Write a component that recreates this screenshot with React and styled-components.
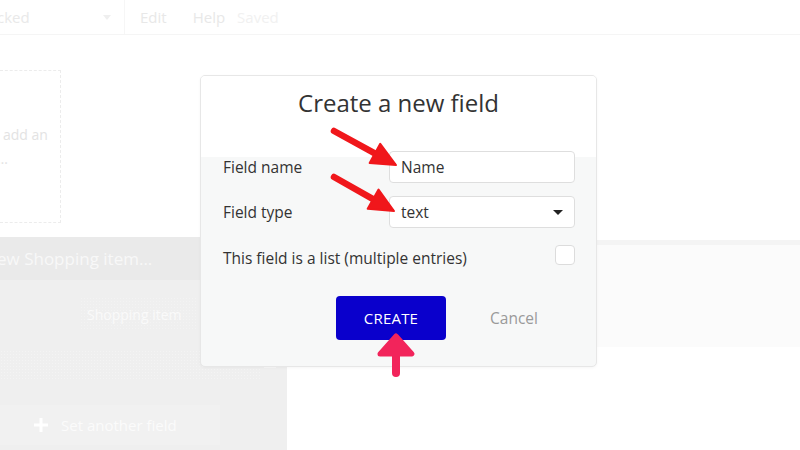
import React from "react";
import styled, { createGlobalStyle } from "styled-components";

const GlobalStyle = createGlobalStyle`
  html, body {
    margin: 0;
    padding: 0;
    background: #ffffff;
  }
  body {
    font-family: "Open Sans", "Noto Sans", "DejaVu Sans", sans-serif;
  }
`;

const Page = styled.div`
  position: relative;
  width: 800px;
  height: 450px;
  overflow: hidden;
  background: #ffffff;
  display: flex;
  flex-direction: column;
`;

const TopBar = styled.div`
  height: 35px;
  flex-shrink: 0;
  display: flex;
  align-items: center;
  border-bottom: 1px solid #f5f5f5;
  box-sizing: border-box;
`;

const PageSelect = styled.div`
  width: 125px;
  height: 100%;
  box-sizing: border-box;
  display: flex;
  align-items: center;
  justify-content: space-between;
  padding-right: 13px;
  border-right: 1px solid #f6f6f6;
  font-size: 15px;
  color: #e9e9e9;
`;

const CutText = styled.span`
  margin-left: -3px;
`;

const FadedCaret = styled.span`
  width: 0;
  height: 0;
  border-left: 4px solid transparent;
  border-right: 4px solid transparent;
  border-top: 5px solid #efefef;
`;

const MenuItem = styled.span`
  font-size: 15px;
  color: ${(p) => p.$color || "#e8e8e8"};
  margin-left: ${(p) => p.$gap}px;
`;

const Body = styled.div`
  flex: 1;
  display: flex;
`;

const LeftColumn = styled.div`
  width: 287px;
  flex-shrink: 0;
  display: flex;
  flex-direction: column;
`;

const DashedBox = styled.div`
  margin-top: 35px;
  width: 61px;
  height: 153px;
  box-sizing: border-box;
  border: 1px dashed #ececec;
  border-left: none;
  overflow: hidden;
  display: flex;
  flex-direction: column;
  padding-top: 52px;
  font-size: 14px;
  line-height: 24px;
  color: #e3e3e3;
  white-space: nowrap;
`;

const HintLine = styled.div`
  margin-left: ${(p) => p.$shift}px;
`;

const GrayPanel = styled.div`
  margin-top: 14px;
  flex: 1;
  background: #efefef;
  display: flex;
  flex-direction: column;
`;

const PanelHeader = styled.div`
  height: 43px;
  background: #eaeaea;
  display: flex;
  align-items: center;
  font-size: 17px;
  color: #f8f8f8;
  white-space: nowrap;
`;

const TypeRow = styled.div`
  margin: 17px 0 0 80px;
  width: 116px;
  height: 34px;
  display: flex;
  align-items: center;
  padding-left: 7px;
  box-sizing: border-box;
  font-size: 14px;
  color: #fafafa;
  background-image: radial-gradient(#f3f3f3 0.6px, transparent 0.8px);
  background-size: 3px 3px;
`;

const DottedRow = styled.div`
  margin-top: 19px;
  width: 262px;
  height: 30px;
  display: flex;
  justify-content: flex-end;
  align-items: center;
  background-image: radial-gradient(#f4f4f4 0.6px, transparent 0.8px);
  background-size: 3px 3px;
`;

const FaintIcon = styled.div`
  width: 10px;
  height: 8px;
  border: 1px solid #f7f7f7;
  border-top-width: 2px;
  margin: 0 -14px 6px 0;
`;

const AddRow = styled.div`
  margin-top: 25px;
  width: 220px;
  height: 40px;
  background: #f1f1f1;
  display: flex;
  align-items: center;
  padding-left: 33px;
  box-sizing: border-box;
  gap: 12px;
  font-size: 15px;
  color: #fbfbfb;
`;

const PlusIcon = () => (
  <svg width="16" height="16" viewBox="0 0 16 16">
    <path d="M8 1v14M1 8h14" stroke="#ffffff" strokeWidth="3" />
  </svg>
);

const RightColumn = styled.div`
  flex: 1;
  display: flex;
  flex-direction: column;
`;

const Band = styled.div`
  margin-top: 205px;
  height: 102px;
  border-top: 5px solid #f4f4f4;
  background: #fbfbfb;
`;

/* modal lies over the faded editor */
const Modal = styled.div`
  position: absolute;
  left: 200px;
  top: 75px;
  width: 397px;
  height: 292px;
  box-sizing: border-box;
  border: 1px solid #e7e7e7;
  border-radius: 5px;
  background: #f7f8f8;
  overflow: hidden;
  box-shadow: 0 1px 3px rgba(0, 0, 0, 0.04);
  display: flex;
  flex-direction: column;
`;

const ModalHead = styled.div`
  height: 75px;
  background: #ffffff;
  padding-top: 11px;
  box-sizing: border-box;
  text-align: center;
`;

const Title = styled.h2`
  margin: 0;
  font-size: 24px;
  font-weight: 400;
  line-height: 32px;
  color: #333333;
`;

const Form = styled.div`
  padding: 0 21px 0 22px;
  display: flex;
  flex-direction: column;
  gap: 13px;
  background: linear-gradient(#ffffff 6px, transparent 6px);
`;

const Row = styled.div`
  height: 32px;
  display: flex;
  align-items: center;
  justify-content: space-between;
`;

const Label = styled.span`
  font-size: 15.5px;
  color: #333333;
  padding-top: ${(p) => p.$drop || 0}px;
`;

const Field = styled.div`
  width: 186px;
  height: 32px;
  box-sizing: border-box;
  border: 1px solid #dedede;
  border-radius: 4px;
  background: #ffffff;
  display: flex;
  align-items: center;
  justify-content: space-between;
  padding: 0 11px 0 11px;
  font-size: 15.5px;
  color: #333333;
`;

const Caret = styled.span`
  width: 0;
  height: 0;
  border-left: 5px solid transparent;
  border-right: 5px solid transparent;
  border-top: 5px solid #222222;
`;

const Check = styled.div`
  width: 20px;
  height: 20px;
  box-sizing: border-box;
  border: 1px solid #dcdcdc;
  border-radius: 4px;
  background: #ffffff;
  margin-bottom: 5px;
`;

const Actions = styled.div`
  margin-top: 23px;
  padding-left: 135px;
  display: flex;
  align-items: center;
  gap: 44px;
`;

const CreateButton = styled.button`
  width: 110px;
  height: 44px;
  border: none;
  border-radius: 4px;
  background: #0a00cc;
  color: #ffffff;
  font-family: inherit;
  font-size: 15px;
  letter-spacing: 0.2px;
  cursor: pointer;
`;

const CancelLink = styled.span`
  font-size: 15.5px;
  color: #9a9a9a;
`;

const Overlay = styled.svg`
  position: absolute;
  left: 0;
  top: 0;
  pointer-events: none;
`;

const RedArrow = ({ x1, y1, x2, y2 }) => {
  const a = Math.atan2(y2 - y1, x2 - x1);
  const len = 24;
  const wing = 11;
  const bx = x2 - Math.cos(a) * len;
  const by = y2 - Math.sin(a) * len;
  const px = -Math.sin(a) * wing;
  const py = Math.cos(a) * wing;
  return (
    <g>
      <line
        x1={x1}
        y1={y1}
        x2={bx + Math.cos(a) * 4}
        y2={by + Math.sin(a) * 4}
        stroke="#f0171b"
        strokeWidth="6.5"
        strokeLinecap="round"
      />
      <polygon
        points={`${x2},${y2} ${bx + px},${by + py} ${bx - px},${by - py}`}
        fill="#f0171b"
        stroke="#f0171b"
        strokeWidth="2"
        strokeLinejoin="round"
      />
    </g>
  );
};

export default function App() {
  return (
    <>
      <GlobalStyle />
      <Page>
        <TopBar>
          <PageSelect>
            <CutText>cked</CutText>
            <FadedCaret />
          </PageSelect>
          <MenuItem $gap={15}>Edit</MenuItem>
          <MenuItem $gap={26}>Help</MenuItem>
          <MenuItem $gap={12} $color="#f1f1f1">
            Saved
          </MenuItem>
        </TopBar>
        <Body>
          <LeftColumn>
            <DashedBox>
              <HintLine $shift={3}>add an</HintLine>
              <HintLine $shift={-3}>…</HintLine>
            </DashedBox>
            <GrayPanel>
              <PanelHeader>
                <CutText>ew Shopping item...</CutText>
              </PanelHeader>
              <TypeRow>Shopping item</TypeRow>
              <DottedRow>
                <FaintIcon />
              </DottedRow>
              <AddRow>
                <PlusIcon />
                <span>Set another field</span>
              </AddRow>
            </GrayPanel>
          </LeftColumn>
          <RightColumn>
            <Band />
          </RightColumn>
        </Body>

        <Modal>
          <ModalHead>
            <Title>Create a new field</Title>
          </ModalHead>
          <Form>
            <Row>
              <Label>Field name</Label>
              <Field>Name</Field>
            </Row>
            <Row>
              <Label>Field type</Label>
              <Field>
                <span>text</span>
                <Caret />
              </Field>
            </Row>
            <Row>
              <Label $drop={2}>This field is a list (multiple entries)</Label>
              <Check />
            </Row>
          </Form>
          <Actions>
            <CreateButton>CREATE</CreateButton>
            <CancelLink>Cancel</CancelLink>
          </Actions>
        </Modal>

        <Overlay width="800" height="450" viewBox="0 0 800 450">
          <RedArrow x1={334} y1={131} x2={396} y2={165} />
          <RedArrow x1={334} y1={177} x2={394} y2={211} />
          <line
            x1="396"
            y1="373"
            x2="396"
            y2="348"
            stroke="#f2245b"
            strokeWidth="8"
            strokeLinecap="round"
          />
          <polygon
            points="396,336 412,354 380,354"
            fill="#f2245b"
            stroke="#f2245b"
            strokeWidth="5"
            strokeLinejoin="round"
          />
        </Overlay>
      </Page>
    </>
  );
}
